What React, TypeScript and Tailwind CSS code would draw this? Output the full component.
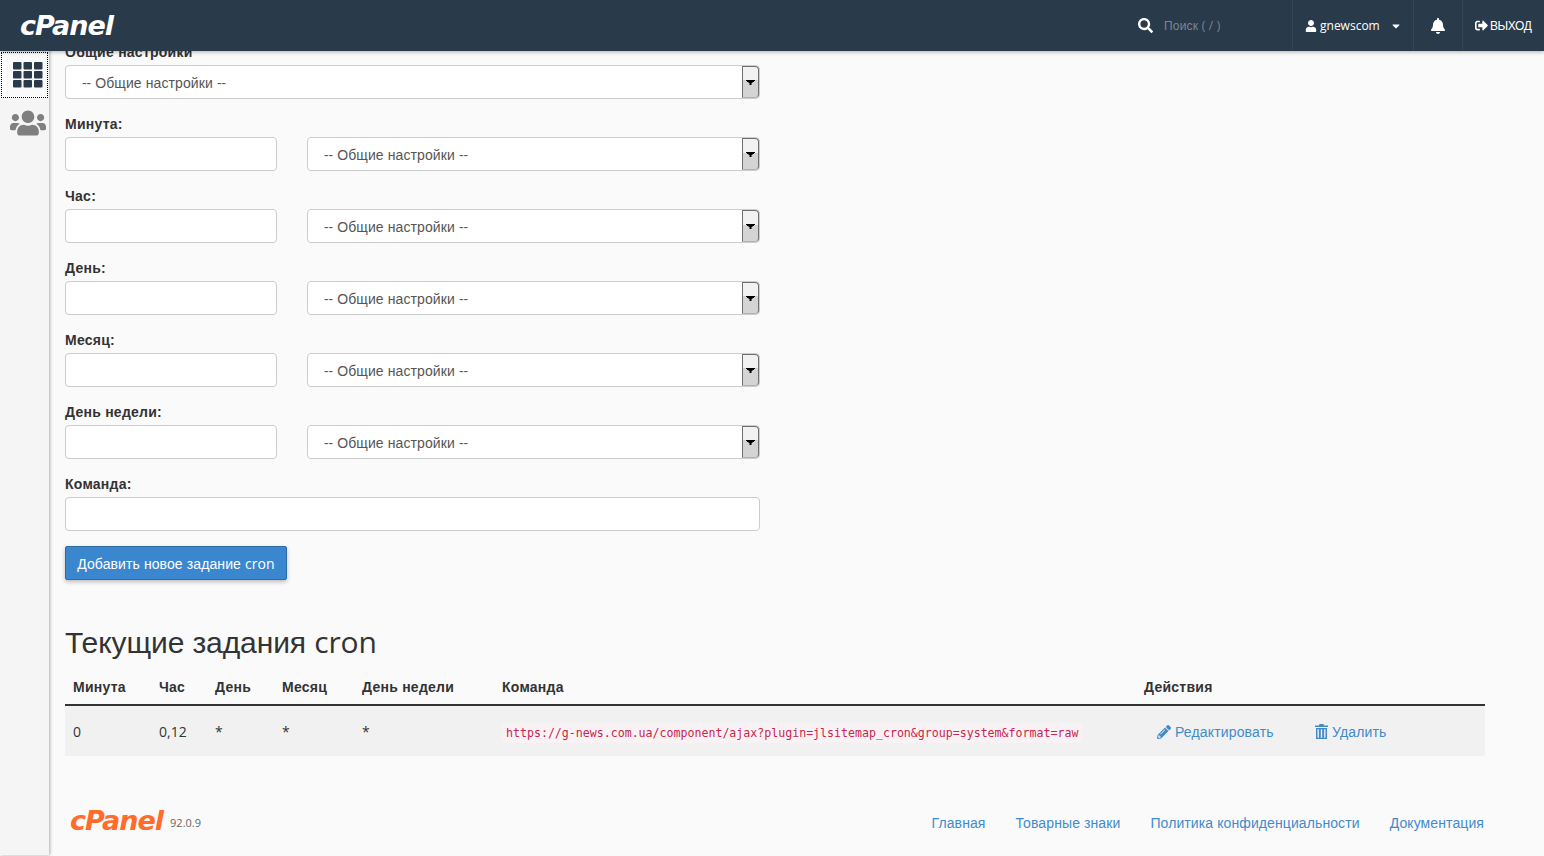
import React from "react";
import { FaBell, FaCaretDown, FaPencilAlt, FaSearch, FaSignOutAlt, FaUser, FaUsers } from "react-icons/fa";

const periodRows = ["Минута:", "Час:", "День:", "Месяц:", "День недели:"];
const headers = ["Минута", "Час", "День", "Месяц", "День недели", "Команда", "Действия"];
const footerLinks = ["Главная", "Товарные знаки", "Политика конфиденциальности", "Документация"];
const cronUrl = "https://g-news.com.ua/component/ajax?plugin=jlsitemap_cron&group=system&format=raw";

function Logo({ className }: { className: string }) {
  return <span className={`font-['DejaVu_Sans',sans-serif] font-bold italic tracking-[-1px] ${className}`}>cPanel</span>;
}

function TrashIcon() {
  return (
    <svg width="13" height="15" viewBox="0 0 13 15" fill="currentColor" aria-hidden="true">
      <path d="M4.5 0h4l.5 1.5h4V3H0V1.5h4z" />
      <path d="M1 4h11v11H1zM2.5 5.2v8.6h1.4V5.2zm3.3 0v8.6h1.4V5.2zm3.3 0v8.6h1.4V5.2z" fillRule="evenodd" />
    </svg>
  );
}

function GridIcon() {
  return (
    <svg width="30" height="26" viewBox="0 0 30 26" fill="#293a4a" aria-hidden="true">
      {[0, 10.5, 21].map((x) =>
        [0, 9, 18].map((y) => <rect key={`${x}-${y}`} x={x} y={y} width="8.5" height="7.5" rx="1" />)
      )}
    </svg>
  );
}

function SelectBox({ className }: { className: string }) {
  return (
    <div className={`relative h-[34px] rounded border border-[#cccccc] bg-white ${className}`}>
      <div className="h-full pl-4 text-sm leading-[33px] tracking-[0.1px] text-[#555555]">
        <span className="font-['Open_Sans',sans-serif]">--</span> Общие настройки{" "}
        <span className="font-['Open_Sans',sans-serif]">--</span>
      </div>
      <div className="absolute top-0 right-0 flex h-[32px] w-[17px] justify-center rounded-r border border-[#707070] border-b-[#b0b0b0] bg-gradient-to-b from-[#f2f2f2] from-45% to-[#d4d4d4] to-45%">
        <svg className="mt-[13px]" width="9" height="5" viewBox="0 0 9 5" fill="#000000" aria-hidden="true">
          <path d="M0 0h9v1H8v1H6.5v1H5.5v2h-2V3h-1V2H1V1H0z" />
        </svg>
      </div>
    </div>
  );
}

function TextBox({ className }: { className: string }) {
  return <input type="text" className={`block h-[34px] rounded border border-[#cccccc] bg-white ${className}`} />;
}

function App() {
  return (
    <div className="relative h-[856px] overflow-hidden bg-[#fafafa] font-['Liberation_Sans',sans-serif] text-sm text-[#333333]">
      {/* Top bar */}
      <header className="absolute inset-x-0 top-0 z-20 flex h-[51px] items-center bg-[#293a4a] pl-5 text-white shadow-[0_1px_4px_rgba(0,0,0,0.3)]">
        <Logo className="text-[27px] leading-none" />
        <div className="ml-auto flex h-full items-center text-xs">
          <div className="flex h-full w-[173px] items-center border-r border-[#32465a] pl-[18px]">
            <FaSearch className="text-[15px]" />
            <span className="ml-[11px] tracking-[0.2px] text-[#7b8793]">
              Поиск <span className="font-['Open_Sans',sans-serif]">( / )</span>
            </span>
          </div>
          <div className="flex h-full w-[121px] items-center border-r border-[#32465a] pl-3">
            <FaUser className="text-xs" />
            <span className="ml-[3px] font-['Open_Sans',sans-serif]">gnewscom</span>
            <FaCaretDown className="ml-[10px] text-xs" />
          </div>
          <div className="flex h-full w-[49px] items-center justify-center border-r border-[#32465a]">
            <FaBell className="text-[16px]" />
          </div>
          <div className="flex h-full w-[81px] items-center pl-[12px]">
            <FaSignOutAlt className="text-[13px]" />
            <span className="ml-[2px] tracking-[-0.4px]">ВЫХОД</span>
          </div>
        </div>
      </header>

      {/* Side rail */}
      <aside className="absolute top-0 bottom-[1px] left-0 z-10 w-[49px] bg-[#f5f5f5] pt-[52px] shadow-[1px_0_3px_rgba(0,0,0,0.3)]">
        <div className="ml-[1px] flex h-[46px] w-[47px] items-center justify-center border border-dotted border-black bg-[#fafafa] pl-[6px]">
          <GridIcon />
        </div>
        <div className="mt-[7px] flex justify-center pl-[6px] text-[#7f7f7f]">
          <FaUsers className="text-[36px]" />
        </div>
      </aside>

      {/* Page content */}
      <main className="pt-[43px] pr-[59px] pl-[65px]">
        <div className="w-[695px]">
          <label className="block h-[22px] text-sm leading-[18px] font-bold tracking-[0.25px]">Общие настройки</label>
          <SelectBox className="w-full" />

          {periodRows.map((label) => (
            <div key={label} className="mt-4">
              <label className="block h-[22px] text-sm leading-[18px] font-bold tracking-[0.25px]">{label}</label>
              <div className="flex justify-between">
                <TextBox className="w-[212px]" />
                <SelectBox className="w-[453px]" />
              </div>
            </div>
          ))}

          <div className="mt-4">
            <label className="block h-[22px] text-sm leading-[18px] font-bold tracking-[0.25px]">Команда:</label>
            <TextBox className="w-full" />
          </div>
        </div>

        <button className="mt-[15px] h-[34px] w-[222px] rounded-[2px] border border-[#2e6da4] bg-[#3a87cf] pt-[1px] text-sm tracking-[0.1px] text-white shadow-[0_2px_4px_rgba(0,0,0,0.25)]">
          Добавить новое задание <span className="font-['Open_Sans',sans-serif]">cron</span>
        </button>

        <h2 className="mt-[45px] text-[30px] leading-[33px] tracking-[-0.1px] text-[#333333]">
          Текущие задания <span className="font-['Open_Sans',sans-serif]">cron</span>
        </h2>

        <table className="mt-[10px] w-[1420px] table-fixed border-collapse">
          <colgroup>
            <col className="w-[86px]" />
            <col className="w-[56px]" />
            <col className="w-[67px]" />
            <col className="w-[80px]" />
            <col className="w-[140px]" />
            <col className="w-[642px]" />
            <col />
          </colgroup>
          <thead>
            <tr className="border-b-2 border-[#333333]">
              {headers.map((h) => (
                <th key={h} className="h-[36px] px-2 text-left align-middle text-sm font-bold tracking-[0.25px]">
                  {h}
                </th>
              ))}
            </tr>
          </thead>
          <tbody>
            <tr className="h-[51px] bg-[#f1f1f1] font-['Open_Sans',sans-serif]">
              <td className="px-2 pt-[1px]">0</td>
              <td className="px-2 pt-[1px]">0,12</td>
              <td className="px-2 pt-[1px]">*</td>
              <td className="px-2 pt-[1px]">*</td>
              <td className="px-2 pt-[1px]">*</td>
              <td className="px-2 pt-[1px]">
                <code className="rounded bg-[#f9f2f4] px-[4px] py-[3px] font-['DejaVu_Sans_Mono',monospace] text-[11.6px] text-[#c7254e]">
                  {cronUrl}
                </code>
              </td>
              <td className="px-2 pt-[1px] font-['Liberation_Sans',sans-serif]">
                <div className="flex items-center pl-[13px] tracking-[0.15px] text-[#428bca]">
                  <a className="flex w-[158px] items-center gap-[4px]">
                    <FaPencilAlt className="text-sm" />
                    Редактировать
                  </a>
                  <a className="flex items-center gap-[4px]">
                    <TrashIcon />
                    Удалить
                  </a>
                </div>
              </td>
            </tr>
          </tbody>
        </table>

        {/* Footer */}
        <footer className="mt-[50px] flex w-[1420px] items-center">
          <Logo className="ml-[5px] text-[27px] leading-[30px] text-[#ff6c2c]" />
          <span className="mt-[4px] ml-[7px] font-['Open_Sans',sans-serif] text-[11px] text-[#666666]">92.0.9</span>
          <nav className="mt-[4px] ml-auto flex gap-[30px] pr-[1px] tracking-[0.1px] text-[#428bca]">
            {footerLinks.map((link) => (
              <a key={link}>{link}</a>
            ))}
          </nav>
        </footer>
      </main>
    </div>
  );
}

export default App;
